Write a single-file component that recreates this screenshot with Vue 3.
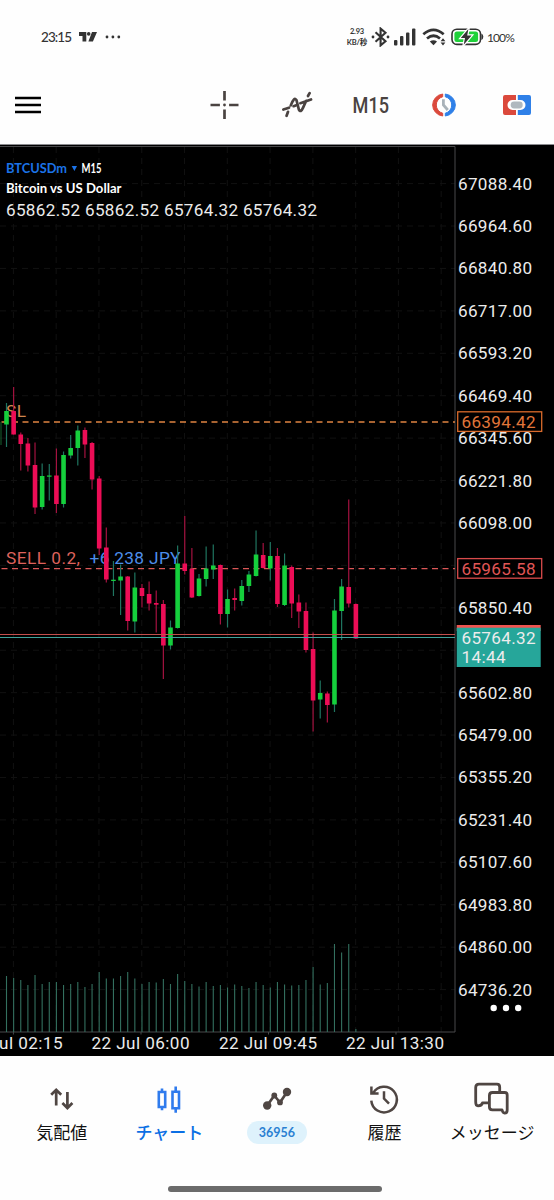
<template>
  <div class="screen">
    <!-- Status bar -->
    <div class="status-bar">
      <span class="clock">23:15</span>
      <svg class="tv-logo" width="18" height="10" viewBox="0 0 18 10">
        <path d="M0 0H7.3V9.5H3.5V4H0Z M13 0H18L13.9 9.5H9.4Z" fill="#333" />
        <circle cx="9.7" cy="1.9" r="1.8" fill="#333" />
      </svg>
      <svg class="dots" width="16" height="4" viewBox="0 0 16 4" fill="#333">
        <circle cx="2" cy="2" r="1.4" />
        <circle cx="7.9" cy="2" r="1.4" />
        <circle cx="13.8" cy="2" r="1.4" />
      </svg>

      <div class="speed">
        <span>2.93</span>
        <span>KB/秒</span>
      </div>
      <svg class="bluetooth" width="20" height="20" viewBox="0 0 20 20">
        <path d="M4.5 5.2L14.5 14.3L9.6 18.4V1.6L14.5 5.7L4.5 14.8" fill="none" stroke="#333" stroke-width="2.1" />
        <circle cx="2" cy="10" r="1.4" fill="#333" />
        <circle cx="17" cy="10" r="1.4" fill="#333" />
      </svg>
      <svg class="signal" width="22" height="18" viewBox="0 0 22 18" fill="#333">
        <rect x="0" y="12" width="3.4" height="5.5" rx="1" />
        <rect x="6" y="8" width="3.4" height="9.5" rx="1" />
        <rect x="12" y="4.4" width="3.4" height="13.1" rx="1" />
        <rect x="18" y="0.5" width="3.4" height="17" rx="1" />
      </svg>
      <svg class="wifi" width="24" height="18" viewBox="0 0 24 18">
        <path d="M1.3 6.3Q11.5 -2.6 21.7 6.3" fill="none" stroke="#333" stroke-width="2.7" />
        <path d="M5 10.5Q11.5 5 18 10.5" fill="none" stroke="#333" stroke-width="2.7" />
        <path d="M7.8 13.6Q11.5 11 15 13.6L11.5 17.2Z" fill="#333" />
        <path d="M18.6 13.3L21 10.3L23.4 13.3Z M18.6 14.5L21 17.5L23.4 14.5Z" fill="#333" />
      </svg>
      <svg class="battery" width="33" height="18" viewBox="0 0 33 18">
        <rect x="1" y="1.2" width="28.5" height="15.2" rx="4.8" fill="#fff" stroke="#333" stroke-width="1.6" />
        <path d="M30.4 5.6Q32.3 6.3 32.3 8.8T30.4 12Z" fill="#333" />
        <rect x="3.4" y="3.5" width="23.7" height="10.6" rx="2.5" fill="#1fd13a" />
        <path d="M17.4 1L9.8 10H14L12.7 16.8L20.6 7.5H16.2Z" fill="#333" stroke="#fff" stroke-width="2.4" paint-order="stroke" />
      </svg>
      <span class="percent">100%</span>
    </div>

    <!-- Toolbar -->
    <header class="toolbar">
      <svg class="menu" width="26" height="18" viewBox="0 0 26 18">
        <path d="M0 2H26M0 9H26M0 16H26" stroke="#000" stroke-width="2.7" />
      </svg>
      <div class="tools">
        <div class="tool">
          <svg width="30" height="30" viewBox="0 0 30 30">
            <path d="M14.5 1V10.4M14.5 19.6V29M.5 15H9.9M19.1 15H28.5" stroke="#4a4341" stroke-width="2.7" />
            <circle cx="14.5" cy="15" r="1.4" fill="#4a4341" />
          </svg>
        </div>
        <div class="tool">
          <svg width="32" height="28" viewBox="0 0 32 28" fill="none" stroke="#4a4341" stroke-width="2.7" stroke-linecap="round">
            <path d="M1.4 18.5L7 16.7M4.6 24.8L6 20.8M8.8 14.4Q12.2 5 14.5 9.2L16.8 18.4Q18.6 22.4 21.2 16.4L24.2 9.8M11.6 15.2L13.6 14.4M18.4 12.2L29 8.5M26 5L27.6 2.2" />
          </svg>
        </div>
        <div class="tool">
          <svg width="40" height="24" viewBox="0 0 40 24">
            <text x="1.6" y="19.8" class="timeframe" textLength="36.4" lengthAdjust="spacingAndGlyphs">M15</text>
          </svg>
        </div>
        <div class="tool">
          <svg width="30" height="26" viewBox="0 0 30 26">
            <path d="M13.7 2A11.6 11.1 0 0 0 13.7 24V21.2A8.2 8.4 0 0 1 13.7 4.8Z" fill="#db493c" stroke="#db493c" />
            <path d="M16.3 2A11.6 11.1 0 0 1 16.3 24V21.2A8.2 8.4 0 0 0 16.3 4.8Z" fill="#2f80e8" stroke="#2f80e8" />
            <path d="M14.4 7.2V13L18.8 18" fill="none" stroke="#a9b2b9" stroke-width="2.8" />
          </svg>
        </div>
        <div class="tool">
          <svg width="30" height="22" viewBox="0 0 30 22">
            <path d="M3 1H14V6H10.5A4.8 4.8 0 0 0 10.5 16H14V21H3Q1 21 1 19V3Q1 1 3 1Z" fill="#db493c" />
            <path d="M15.8 1H27Q29 1 29 3V19Q29 21 27 21H15.8V16H18.5A4.8 4.8 0 0 0 18.5 6H15.8Z" fill="#2f80e8" />
            <rect x="8.7" y="7.6" width="12" height="6.8" rx="3.4" fill="#b0b8be" />
          </svg>
        </div>
      </div>
    </header>

    <!-- Chart -->
    <svg class="chart" width="554" height="912" viewBox="0 144 554 912">
      <rect y="144" width="554" height="1" fill="#8b8b8f" />
      <g class="grid">
        <line v-for="n in 11" :key="'v' + n" :x1="13.4 + (n - 1) * 42.78" :x2="13.4 + (n - 1) * 42.78" y1="147" y2="1032" />
        <line v-for="(p, n) in prices" :key="'h' + n" x1="0" x2="455" :y1="priceY(n)" :y2="priceY(n)" />
      </g>
      <path d="M0 146.5H455V1032H0" class="frame" />
      <path d="M13.4 1032V1034.5M141 1032V1034.5M268.5 1032V1034.5M396 1032V1034.5" class="frame" />

      <!-- Volumes -->
      <line v-for="(v, i) in volumes" :key="'vol' + i" :x1="candleX(i)" :x2="candleX(i)" :y1="v" y2="1032" class="volume" />

      <text x="6" y="416.7" class="sl" textLength="20">SL</text>
      <text x="6" y="563.7" class="sell" textLength="74">SELL 0.2,</text>
      <text x="89.5" y="563.7" class="profit" textLength="91">+6 238 JPY</text>
      <line x1="1.5" x2="455" y1="422" y2="422" class="sl-line" />
      <line x1="1.5" x2="455" y1="568.7" y2="568.7" class="sell-line" />

      <!-- Candles -->
      <line x1="1" x2="1" y1="422" y2="445" stroke="#17612f" />
      <g v-for="(c, i) in candles" :key="i" :class="c[4] ? 'up' : 'down'">
        <line :x1="candleX(i)" :x2="candleX(i)" :y1="c[0]" :y2="c[3]" />
        <rect :x="candleX(i) - 2.3" :y="c[1]" width="4.6" :height="c[2] - c[1]" />
      </g>

      <line x1="0" x2="455" y1="634.5" y2="634.5" class="ask" />
      <line x1="0" x2="455" y1="637.5" y2="637.5" class="bid" />

      <!-- Symbol info -->
      <text x="6" y="173" class="symbol" textLength="61" lengthAdjust="spacingAndGlyphs">BTCUSDm</text>
      <path d="M71.7 166H77L74.4 171Z" fill="#1b73e8" />
      <text x="81.5" y="173" class="info" textLength="20" lengthAdjust="spacingAndGlyphs">M15</text>
      <text x="6" y="193.3" class="info" textLength="115.5" lengthAdjust="spacingAndGlyphs">Bitcoin vs US Dollar</text>
      <text x="6" y="215.7" class="axis" textLength="311">65862.52 65862.52 65764.32 65764.32</text>

      <!-- Price axis -->
      <template v-for="(p, n) in prices" :key="'p' + n">
        <text v-if="p" x="458" :y="priceY(n) + 6" class="axis" textLength="74">{{ p }}</text>
      </template>
      <rect x="457.7" y="411.8" width="84" height="19.6" class="tag-sl" />
      <text x="461.5" y="427.7" class="axis orange" textLength="74">66394.42</text>
      <rect x="457.7" y="558.6" width="84" height="19.6" class="tag-sell" />
      <text x="461.5" y="574.5" class="axis red" textLength="74">65965.58</text>
      <rect x="456.7" y="625" width="84" height="6" fill="#ef5350" />
      <rect x="456.7" y="627.7" width="84" height="39.3" fill="#26a69a" />
      <text x="461.5" y="643.7" class="axis" textLength="74">65764.32</text>
      <text x="461.5" y="663" class="axis" textLength="44">14:44</text>

      <!-- Time axis -->
      <text x="62.5" y="1049.3" text-anchor="end" class="axis" textLength="98">22 Jul 02:15</text>
      <text x="91.5" y="1049.3" class="axis" textLength="98">22 Jul 06:00</text>
      <text x="219" y="1049.3" class="axis" textLength="98">22 Jul 09:45</text>
      <text x="346" y="1049.3" class="axis" textLength="98">22 Jul 13:30</text>
      <circle v-for="x in [493.7, 506, 518.2]" :key="x" :cx="x" cy="1008" r="3.2" fill="#fff" />
    </svg>

    <!-- Bottom navigation -->
    <nav class="bottom-nav">
      <div class="nav-item">
        <svg width="36" height="36" viewBox="0 0 36 36" fill="none" stroke="#4f4643" stroke-width="2.7">
          <path d="M12.2 24.5V9.2M7.2 13.8L12.2 8.8L17.2 13.8M23.4 11V26.5M18.4 22L23.4 27L28.4 22" />
        </svg>
        <span class="label">気配値</span>
      </div>
      <div class="nav-item active">
        <svg width="36" height="36" viewBox="0 0 36 36" fill="none" stroke="#2f7bed" stroke-width="2.6">
          <path d="M7.8 11H14.2V26H7.8ZM11 7.5V11M11 26V29.2M21.5 10.8H28V27.2H21.5ZM24.7 5.5V10.8M24.7 27.2V31.8" />
        </svg>
        <span class="label">チャート</span>
      </div>
      <div class="nav-item">
        <svg width="36" height="36" viewBox="0 0 36 36">
          <path d="M8.2 24.5L15.3 14.5L21 21.5L28 11" fill="none" stroke="#4f4643" stroke-width="2.7" stroke-linejoin="round" />
          <g fill="#4f4643">
            <circle cx="8.2" cy="24.5" r="4.2" />
            <circle cx="15.3" cy="14.5" r="2.9" />
            <circle cx="21" cy="21.4" r="2.9" />
            <circle cx="28" cy="11" r="4.2" />
          </g>
        </svg>
        <span class="badge">36956</span>
      </div>
      <div class="nav-item">
        <svg width="36" height="36" viewBox="0 0 36 36" fill="none" stroke="#4f4643" stroke-width="2.5">
          <path d="M6.2 11.8A12.8 12.8 0 1 1 4.3 19.6M4.4 5.4V12.6H11.6M17 10.2V17.5L22 22.7" />
        </svg>
        <span class="label">履歴</span>
      </div>
      <div class="nav-item">
        <svg width="36" height="36" viewBox="0 0 36 36" fill="none" stroke="#4f4643" stroke-width="2.8" stroke-linejoin="round">
          <path d="M14.2 21.8H8.5Q8 24.8 4 24.8Q1.7 24.8 1.7 21V6.5Q1.7 3.2 5 3.2H23Q25.7 3.2 25.7 6.2V10" />
          <path d="M18.4 11.5H30.7Q33.2 11.5 33.2 14V29Q33.2 32.2 30.7 32.2Q28.7 32 28 28.8H18.4Q15.4 28.8 15.4 26V14.5Q15.4 11.5 18.4 11.5Z" />
        </svg>
        <span class="label">メッセージ</span>
      </div>
    </nav>
    <div class="home-indicator"></div>
  </div>
</template>

<script setup>
// hidden labels sit behind the price tags
const prices = [
  '67088.40', '66964.60', '66840.80', '66717.00', '66593.20',
  '66469.40', '66345.60', '66221.80', '66098.00', '',
  '65850.40', '', '65602.80', '65479.00', '65355.20',
  '65231.40', '65107.60', '64983.80', '64860.00', '64736.20'
]

// high, body top, body bottom, low, rising
const candles = [
  [403, 411, 424.5, 447, 1], [387, 411, 434.5, 434.5, 0],
  [432.5, 434.5, 444, 470.5, 0], [438, 443.5, 465.5, 471.5, 0],
  [442.5, 465, 507.5, 514, 0], [463.5, 476, 507, 509.5, 1],
  [464, 475.5, 476.7, 500.5, 1], [448.5, 475.5, 504, 513, 0],
  [451.5, 455, 504, 507.5, 1], [435, 448, 455.5, 458.5, 1],
  [425.5, 430.5, 448, 465.5, 1], [427.5, 430, 444.5, 458, 0],
  [442, 443, 479.5, 489.5, 0], [476, 478.5, 548.5, 555, 0],
  [527.5, 547.5, 579.5, 582.5, 0], [561, 579.7, 581, 596, 1],
  [564.5, 576.5, 580.5, 615, 1], [576, 576.5, 621, 630.5, 0],
  [572.5, 587.5, 621.5, 632.5, 1], [584, 588, 596, 607.5, 0],
  [581.5, 594, 603.5, 610.5, 0], [590.5, 603, 604.7, 632.5, 0],
  [600, 604, 645.5, 679, 0], [620.5, 627.5, 645.5, 649.5, 1],
  [545.5, 563.5, 628, 628.5, 1], [516, 563.5, 571, 574.5, 0],
  [548, 569, 597.5, 598, 0], [574, 578.5, 596, 596.5, 1],
  [546.5, 568.5, 579, 586.5, 1], [544.5, 565.5, 569.5, 579, 1],
  [564.5, 565, 614, 624.5, 0], [589.5, 599, 614, 627.5, 1],
  [588.5, 598, 600, 610.5, 0], [580, 586, 601, 605.5, 1],
  [571, 574.5, 586, 592, 1], [530.5, 554.5, 576, 576.5, 1],
  [543, 555, 568, 568.5, 0], [542, 556, 568.5, 580.5, 1],
  [548, 556, 604, 607, 0], [553.5, 565.5, 605, 606, 1],
  [565.5, 567, 603.5, 618, 0], [594.5, 602.5, 611.5, 628, 0],
  [602.5, 611, 650, 652.5, 0], [632.5, 649, 700.5, 731.5, 0],
  [680.5, 693, 699.5, 718.5, 1], [691.5, 693.5, 705, 722.5, 0],
  [599, 610.5, 704.5, 712, 1], [579, 586.5, 611, 640, 1],
  [499.5, 587, 603.5, 607.5, 0], [603.5, 604, 638.5, 639, 0]
]

const volumes = [
  976, 978, 980, 985, 975, 984, 982, 982, 985, 984,
  982, 987, 984, 972, 978.5, 978.5, 976, 972, 978.5, 984,
  982, 982.5, 979, 984, 974, 981, 984, 986.5, 982, 986,
  985, 987.5, 984.5, 986, 988, 982, 985, 987.5, 982, 984.5,
  985.5, 985, 980, 967, 984.5, 983, 944, 952.5, 944, 1029
]

const candleX = (i) => 6.5 + i * 7.13
const priceY = (n) => 183.6 + n * 42.42
</script>

<style>
body {
  background: #fff;
}
</style>

<style scoped>
.screen {
  width: 554px;
  height: 1200px;
  background: #fefefe;
  font-family: Roboto, 'Noto Sans CJK JP', sans-serif;
  overflow: hidden;
}

svg {
  display: block;
  flex: none;
}

.status-bar {
  display: flex;
  align-items: center;
  height: 74px;
  padding-left: 41px;
  color: #333;
  font-family: Lato, 'Noto Sans CJK JP', sans-serif;
}

.clock {
  width: 38px;
  font-size: 13.5px;
  font-weight: 500;
  letter-spacing: -0.9px;
}

.dots {
  margin-left: 8px;
}

.speed {
  display: flex;
  flex-direction: column;
  align-items: center;
  width: 22px;
  margin-left: 225px;
  font-size: 7.5px;
  font-weight: 700;
  line-height: 11px;
  letter-spacing: -0.2px;
  white-space: nowrap;
}

.bluetooth {
  margin-left: 3px;
}

.signal {
  margin-left: 3px;
}

.wifi {
  margin-left: 6px;
}

.battery {
  margin-left: 5px;
}

.percent {
  margin-left: 3px;
  font-size: 12px;
  letter-spacing: -0.9px;
}

.toolbar {
  display: flex;
  align-items: center;
  justify-content: space-between;
  height: 62px;
  padding: 0 0 8px 15px;
}

.tools {
  display: flex;
}

.tool {
  display: flex;
  align-items: center;
  justify-content: center;
  width: 73.1px;
}

.timeframe {
  fill: #4a4341;
  font-size: 21.5px;
  font-weight: 500;
}

.chart {
  background: #000;
}

.grid line {
  stroke: #111;
  stroke-dasharray: 6 5;
}

.frame {
  fill: none;
  stroke: #48484a;
}

.volume {
  stroke: #33705f;
  stroke-width: 1.1;
}

.axis {
  fill: #ececec;
  font-size: 17.1px;
}

.orange {
  fill: #e2763a;
}

.red {
  fill: #e05656;
}

.sl,
.sell,
.profit {
  font-size: 17.3px;
}

.sl {
  fill: #d0874f;
}

.sell {
  fill: #dd625c;
}

.profit {
  fill: #4d8eea;
}

.sl-line,
.sell-line {
  stroke-width: 1.3;
  stroke-dasharray: 6 4.5;
}

.sl-line {
  stroke: #df8441;
}

.sell-line {
  stroke: #dc5757;
}

.ask {
  stroke: #c24e4c;
  stroke-width: 1.2;
}

.bid {
  stroke: #3fa39b;
  stroke-width: 1.2;
}

.up line {
  stroke: #1f7560;
  stroke-width: 1.2;
}

.up rect {
  fill: #15cf3c;
}

.down line {
  stroke: #a51240;
  stroke-width: 1.2;
}

.down rect {
  fill: #ec0d56;
}

.symbol,
.info {
  font-family: Lato, sans-serif;
  font-size: 13px;
  font-weight: 700;
}

.symbol {
  fill: #1b73e8;
}

.info {
  fill: #fff;
}

.tag-sl,
.tag-sell {
  fill: #000;
  stroke-width: 1.3;
}

.tag-sl {
  stroke: #d96a2b;
}

.tag-sell {
  stroke: #d94b4b;
}

.bottom-nav {
  display: flex;
  height: 130px;
  padding: 25px 8px 0;
  box-sizing: border-box;
}

.nav-item {
  display: flex;
  flex-direction: column;
  align-items: center;
  width: 107.6px;
}

.label {
  margin-top: 3px;
  color: #111;
  font-family: 'Noto Sans CJK JP', sans-serif;
  font-size: 17px;
  line-height: 24px;
  white-space: nowrap;
}

.active .label {
  color: #0b6fe4;
  font-weight: 500;
}

.badge {
  width: 60px;
  height: 23px;
  margin-top: 4px;
  border-radius: 12px;
  background: #def2fc;
  color: #2a80d2;
  font-family: Lato, sans-serif;
  font-size: 12.5px;
  font-weight: 700;
  line-height: 23px;
  text-align: center;
}

.home-indicator {
  width: 214px;
  height: 5.5px;
  margin: 0 auto;
  border-radius: 3px;
  background: #6b6b6b;
  transform: translateX(-2px);
}
</style>
